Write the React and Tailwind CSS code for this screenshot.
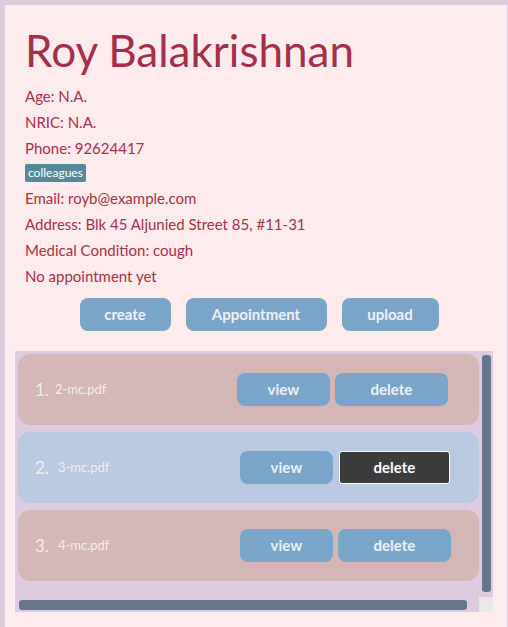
const files = [
  { n: "1.", name: "2-mc.pdf", bg: "bg-[#d5b6b6]", gap: "ml-[6px]", active: false },
  { n: "2.", name: "3-mc.pdf", bg: "bg-[#b8c9e1]", gap: "ml-[9px]", active: true },
  { n: "3.", name: "4-mc.pdf", bg: "bg-[#d5b6b6]", gap: "ml-[9px]", active: false },
];

function Btn({ children, className = "" }) {
  return (
    <button
      className={`h-[33px] rounded-lg bg-[#79a5cb] text-[15px] font-bold text-[#eef1f6] ${className}`}
    >
      {children}
    </button>
  );
}

export default function App() {
  return (
    <div
      className="min-h-screen bg-[#dfcbe0] pl-[5px] pt-[5px] pr-px overflow-hidden"
      style={{ fontFamily: "Lato, 'Open Sans', sans-serif" }}
    >
      <div className="bg-[#fdebed] px-[10px] pt-[15px] pb-[20px] min-h-[622px]">
        <div className="px-[10px]">
          <h1 className="text-[44px] leading-[60px] font-normal text-[#a52e4a]">
            Roy Balakrishnan
          </h1>
          <div className="mt-[3px] flex flex-col text-[15px] leading-[26px] text-[#a63246]">
            <div>Age: N.A.</div>
            <div>NRIC: N.A.</div>
            <div>Phone: 92624417</div>
            <div className="flex h-[24px] items-center">
              <span className="inline-block rounded-[2px] bg-[#53899b] px-[3px] text-[12px] leading-[18px] text-white">
                colleagues
              </span>
            </div>
            <div>Email: royb@example.com</div>
            <div>Address: Blk 45 Aljunied Street 85, #11-31</div>
            <div>Medical Condition: cough</div>
            <div>No appointment yet</div>
          </div>
          <div className="mt-[9px] flex justify-center gap-[15px] pl-[6px]">
            <Btn className="w-[91px]">create</Btn>
            <Btn className="w-[141px]">Appointment</Btn>
            <Btn className="w-[97px]">upload</Btn>
          </div>
        </div>

        <div className="mt-[20px] grid h-[261px] w-[478px] grid-cols-[1fr_14px] grid-rows-[1fr_15px] bg-[#dfcbe0]">
          <div className="flex flex-col gap-[7px] overflow-hidden pl-[3px] pt-[3px]">
            {files.map((f) => (
              <div
                key={f.n}
                className={`flex h-[71px] items-center rounded-xl ${f.bg} pl-[17px]`}
              >
                <span className="text-[17px] text-[#f3eded]">{f.n}</span>
                <span className={`${f.gap} w-[182px] text-[13px] text-[#f3eded]`}>
                  {f.name}
                </span>
                <Btn className="w-[93px]">view</Btn>
                {f.active ? (
                  <button className="ml-[6px] h-[33px] w-[111px] rounded-[3px] border border-white bg-[#3c3c3c] text-[15px] font-bold text-white">
                    delete
                  </button>
                ) : (
                  <Btn className="ml-[5px] w-[113px]">delete</Btn>
                )}
              </div>
            ))}
          </div>
          <div className="pl-[3px] pr-[2px] pt-[4px] pb-[5px]">
            <div className="h-full w-[9px] rounded-[3px] bg-[#68758f]" />
          </div>
          <div className="pl-[4px] pr-[12px] pt-[3px]">
            <div className="h-[10px] rounded-[3px] bg-[#68758f]" />
          </div>
          <div className="bg-[#e8e8e8]" />
        </div>
      </div>
    </div>
  );
}
